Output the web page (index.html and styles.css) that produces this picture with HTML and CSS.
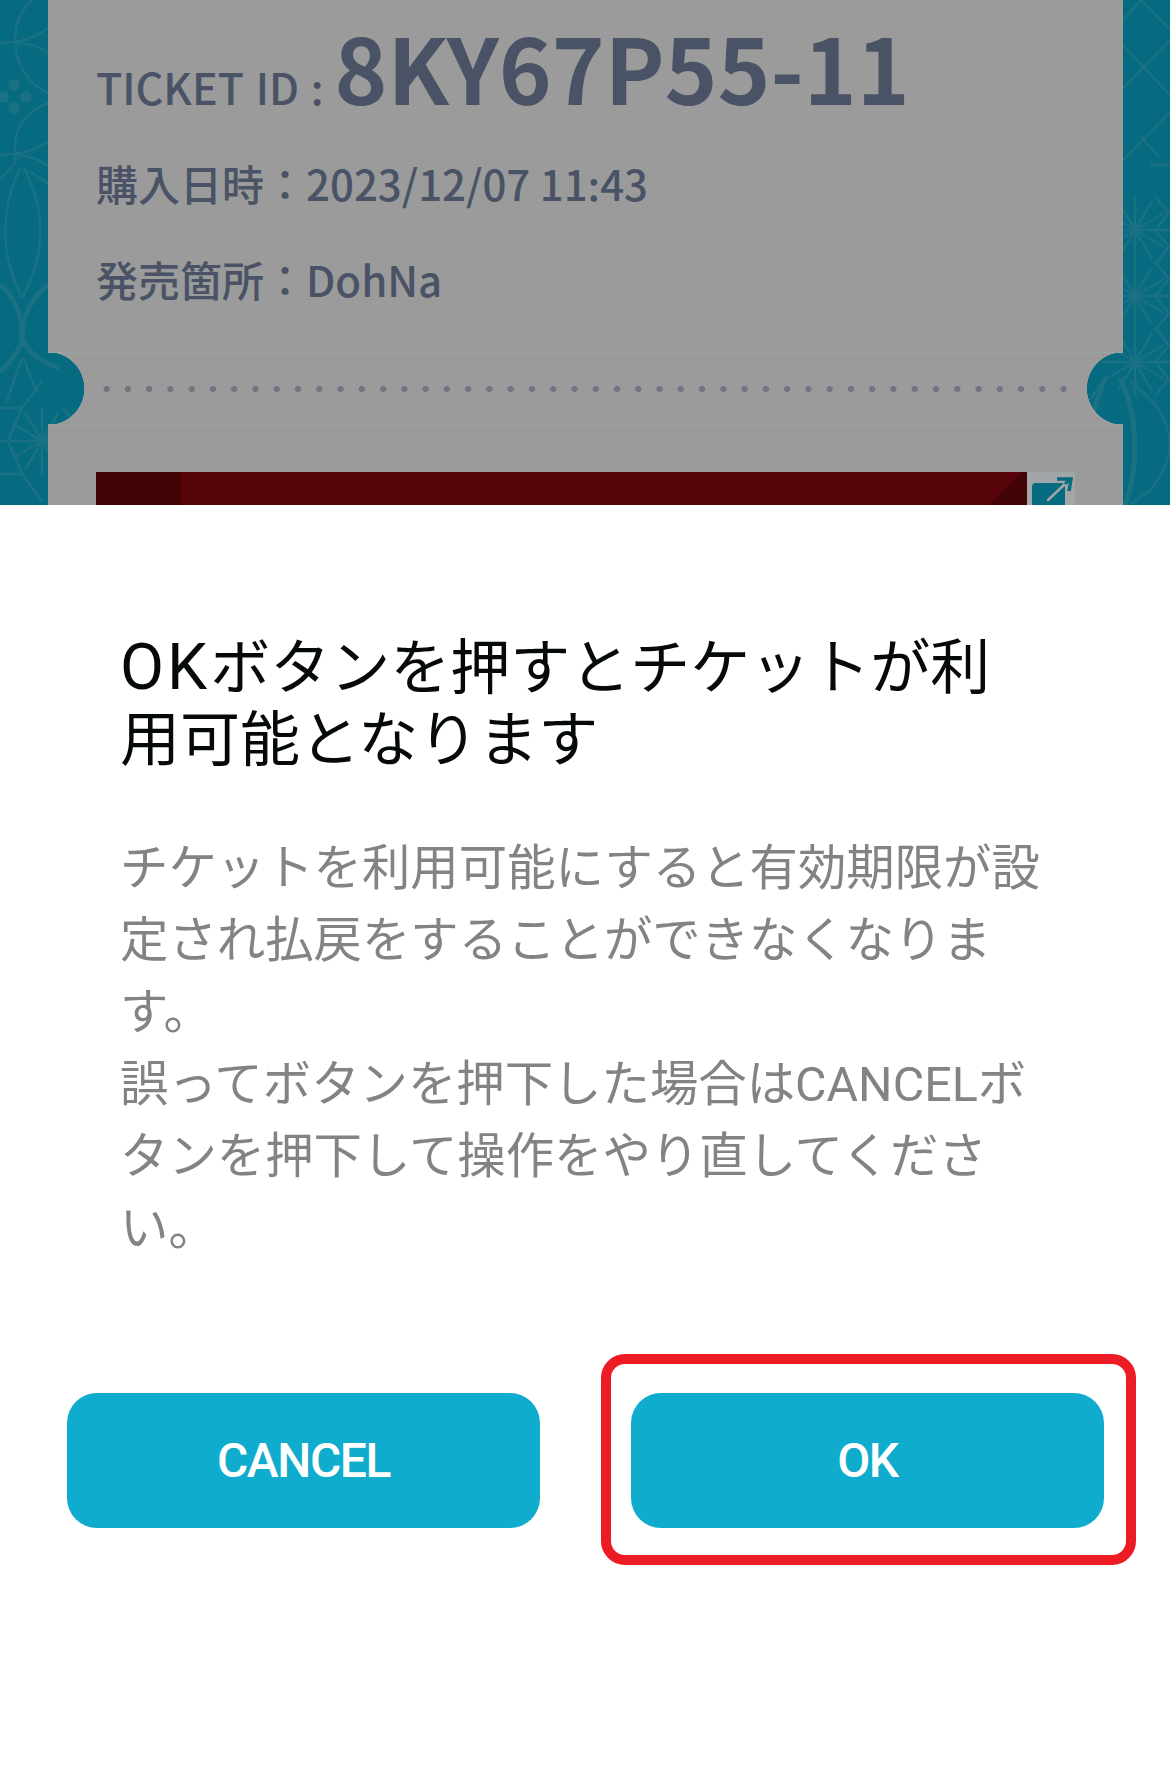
FILE: index.html
```html
<!DOCTYPE html>
<html lang="ja">
<head>
  <meta charset="UTF-8">
  <title>チケット利用確認</title>
  <link rel="stylesheet" href="styles.css">
</head>
<body>

  <!-- 後ろのチケット画面 -->
  <div class="backdrop">
    <svg class="pattern" viewBox="0 0 1170 505" aria-hidden="true">
      <defs>
        <g id="asanoha">
          <path d="M0 -34V34M-34 0H34M-29 -17L29 17M-29 17L29 -17M-17 -29L17 29M-17 29L17 -29"/>
          <path d="M20 -34L34 -17H50M34 -17L20 0M20 0H50M20 0L34 17H50M34 17L20 34"/>
        </g>
        <g id="flower">
          <circle cx="14" cy="85" r="6"/>
          <circle cx="3" cy="97" r="6"/>
          <circle cx="26" cy="97" r="6"/>
          <circle cx="14" cy="108" r="6"/>
        </g>
      </defs>
      <!-- 左 -->
      <use class="pattern-fill" href="#flower"/>
      <g class="pattern-lines">
        <path d="M33 0C20 10 15 25 15 40C15 65 30 85 48 93"/>
        <path d="M0 43C18 43 35 38 48 28M15 43C28 43 40 47 48 53"/>
        <path d="M48 103C30 110 15 125 15 145V160"/>
        <path d="M0 155C18 155 35 150 48 142M15 155C28 155 40 160 48 166"/>
        <path d="M20 168C0 210 0 255 22 298M24 168C46 210 46 255 22 298"/>
        <path d="M30 172C38 176 44 180 48 184"/>
        <path d="M0 178C8 172 14 165 18 158"/>
        <path class="thick" d="M0 285C14 295 22 315 22 335C22 350 10 362 0 372"/>
        <path class="thick" d="M48 285C34 295 22 315 22 335C24 350 40 362 60 368"/>
        <path d="M22 358C16 375 10 390 7 402M24 358C28 372 32 382 38 392"/>
        <use href="#asanoha" transform="translate(42 441)"/>
        <path d="M0 408H22L42 381M22 408L8 441L22 474H0M22 474L42 501M8 441H-10"/>
      </g>
      <!-- 右 -->
      <g class="pattern-lines">
        <path d="M1123 20L1141 0L1170 30M1123 88L1170 40M1123 45L1170 95M1123 160L1170 112M1141 137L1160 158"/>
        <use href="#asanoha" transform="translate(1135 230)"/>
        <use href="#asanoha" transform="translate(1135 296)"/>
        <use href="#asanoha" transform="translate(1135 362)"/>
        <path d="M1150 165H1170"/>
        <path class="thick" d="M1120 378C1140 420 1138 470 1125 505"/>
        <path d="M1130 382C1170 410 1185 450 1150 490C1140 498 1135 502 1130 505"/>
        <path class="thick" d="M1105 378C1098 395 1094 410 1092 420"/>
        <path d="M1090 400L1106 376"/>
      </g>
    </svg>

    <div class="ticket">
      <div class="ticket-info">
        <div class="ticket-id">
          <span class="ticket-id-label">TICKET ID :</span>
          <span class="ticket-id-value">8KY67P55-11</span>
        </div>
        <div class="ticket-row">購入日時：2023/12/07 11:43</div>
        <div class="ticket-row">発売箇所：DohNa</div>
      </div>
      <div class="ticket-stub">
        <div class="ticket-dots"></div>
      </div>
      <div class="ticket-image">
        <div class="banner"></div>
        <div class="banner-link">
          <svg viewBox="0 0 48 34" aria-hidden="true">
            <rect x="5" y="11" width="33" height="30" rx="4" fill="#066a80"/>
            <path d="M21 28L38 12" fill="none" stroke="#a3a6a8" stroke-width="2.5" stroke-linecap="round"/>
            <path d="M38 12L43 7" fill="none" stroke="#066a80" stroke-width="3"/>
            <path d="M30 7H44L42 19" fill="none" stroke="#066a80" stroke-width="3.5"/>
          </svg>
        </div>
      </div>
    </div>
  </div>

  <!-- 確認シート -->
  <div class="sheet">
    <div class="sheet-text">
      <h2 class="sheet-title"><span class="title-latin">OK</span>ボタンを押すとチケットが利<br>用可能となります</h2>
      <p class="sheet-body">チケットを利用可能にすると有効期限が設定され払戻をすることができなくなります。<br>誤ってボタンを押下した場合はCANCELボタンを押下して操作をやり直してください。</p>
    </div>
    <div class="sheet-actions">
      <button class="btn">CANCEL</button>
      <div class="btn-marked">
        <button class="btn">OK</button>
        <div class="marker"></div>
      </div>
    </div>
  </div>

</body>
</html>
```

FILE: styles.css
```css
* {
    box-sizing: border-box;
}
body {
    margin: 0;
    width: 1170px;
    height: 1780px;
    overflow: hidden;
    background: #fff;
    font-family: "Noto Sans CJK JP", sans-serif;
}

/* 後ろの画面 */
.backdrop {
    position: relative;
    height: 505px;
    overflow: hidden;
    background: #066a80;
    padding: 0 47px 0 48px;
}
.pattern {
    position: absolute;
    left: 0;
    top: 0;
    width: 1170px;
    height: 505px;
}
.pattern-lines {
    fill: none;
    stroke: #1a7184;
    stroke-width: 2.5;
}
.pattern-lines .thick {
    stroke-width: 5;
}
.pattern-fill {
    fill: #1a7184;
}
.ticket {
    position: relative;
    height: 505px;
    color: #4a5366;
}
.ticket-info {
    height: 352px;
    background: #9b9b9b;
    padding: 16px 0 0 48px;
}
.ticket-id {
    display: flex;
    align-items: baseline;
    gap: 11px;
    height: 101px;
}
.ticket-id-label {
    font-size: 43px;
    font-weight: 500;
    line-height: 100px;
    word-spacing: 2px;
}
.ticket-id-value {
    font-size: 89.8px;
    font-weight: 700;
    line-height: 100px;
}
.ticket-row {
    font-size: 42px;
    font-weight: 500;
    line-height: 60px;
    margin-top: 36px;
}
.ticket-stub {
    height: 73px;
    border-top: 1px solid #9ba3a6;
    border-bottom: 1px solid #9ba3a6;
    background:
        radial-gradient(circle at 0 50%, transparent 36px, #9b9b9b 36.5px) left / 51% 100% no-repeat,
        radial-gradient(circle at 100% 50%, transparent 36px, #9b9b9b 36.5px) right / 51% 100% no-repeat;
    padding: 0 49.5px 0 47.5px;
    display: flex;
    align-items: center;
}
.ticket-dots {
    width: 100%;
    height: 6px;
    background: radial-gradient(ellipse 3.5px 3px at center, #6f7682 90%, transparent) left / 21.27px 6px repeat-x;
}
.ticket-image {
    height: 80px;
    background: #9b9b9b;
    padding: 47px 48px 0 48px;
    display: flex;
}
.banner {
    flex: 1;
    background:
        linear-gradient(135deg, transparent 96%, #420304 96.1%),
        linear-gradient(90deg, #420304 85px, #57040a 85px);
}
.banner-link {
    width: 48px;
    height: 33px;
    background: #a3a6a8;
}
.banner-link svg {
    display: block;
    width: 48px;
    height: 34px;
}

/* シート */
.sheet-text {
    padding: 127px 125px 0 120px;
}
.sheet-title {
    margin: 0;
    font-family: Roboto, "Noto Sans CJK JP", sans-serif;
    font-size: 60px;
    font-weight: 400;
    line-height: 72px;
    color: #050a08;
}
.title-latin {
    font-size: 64px;
    letter-spacing: 3px;
}
.sheet-body {
    margin: 56px 0 0;
    font-family: Roboto, "Noto Sans CJK JP", sans-serif;
    font-size: 48.4px;
    line-height: 72px;
    color: #828482;
}
.sheet-actions {
    display: flex;
    gap: 91px;
    padding-left: 67px;
    margin-top: 128px;
}
.btn {
    display: block;
    width: 473px;
    height: 135px;
    border: 0;
    border-radius: 30px;
    background: #0faccd;
    color: #fff;
    font-family: Roboto, sans-serif;
    font-size: 48px;
    font-weight: 500;
    letter-spacing: -1.4px;
    padding: 0;
}
.btn-marked {
    position: relative;
}
.marker {
    position: absolute;
    left: -30px;
    right: -32px;
    top: -39px;
    bottom: -37px;
    border: 10px solid #ed1c24;
    border-radius: 24px;
}
```
